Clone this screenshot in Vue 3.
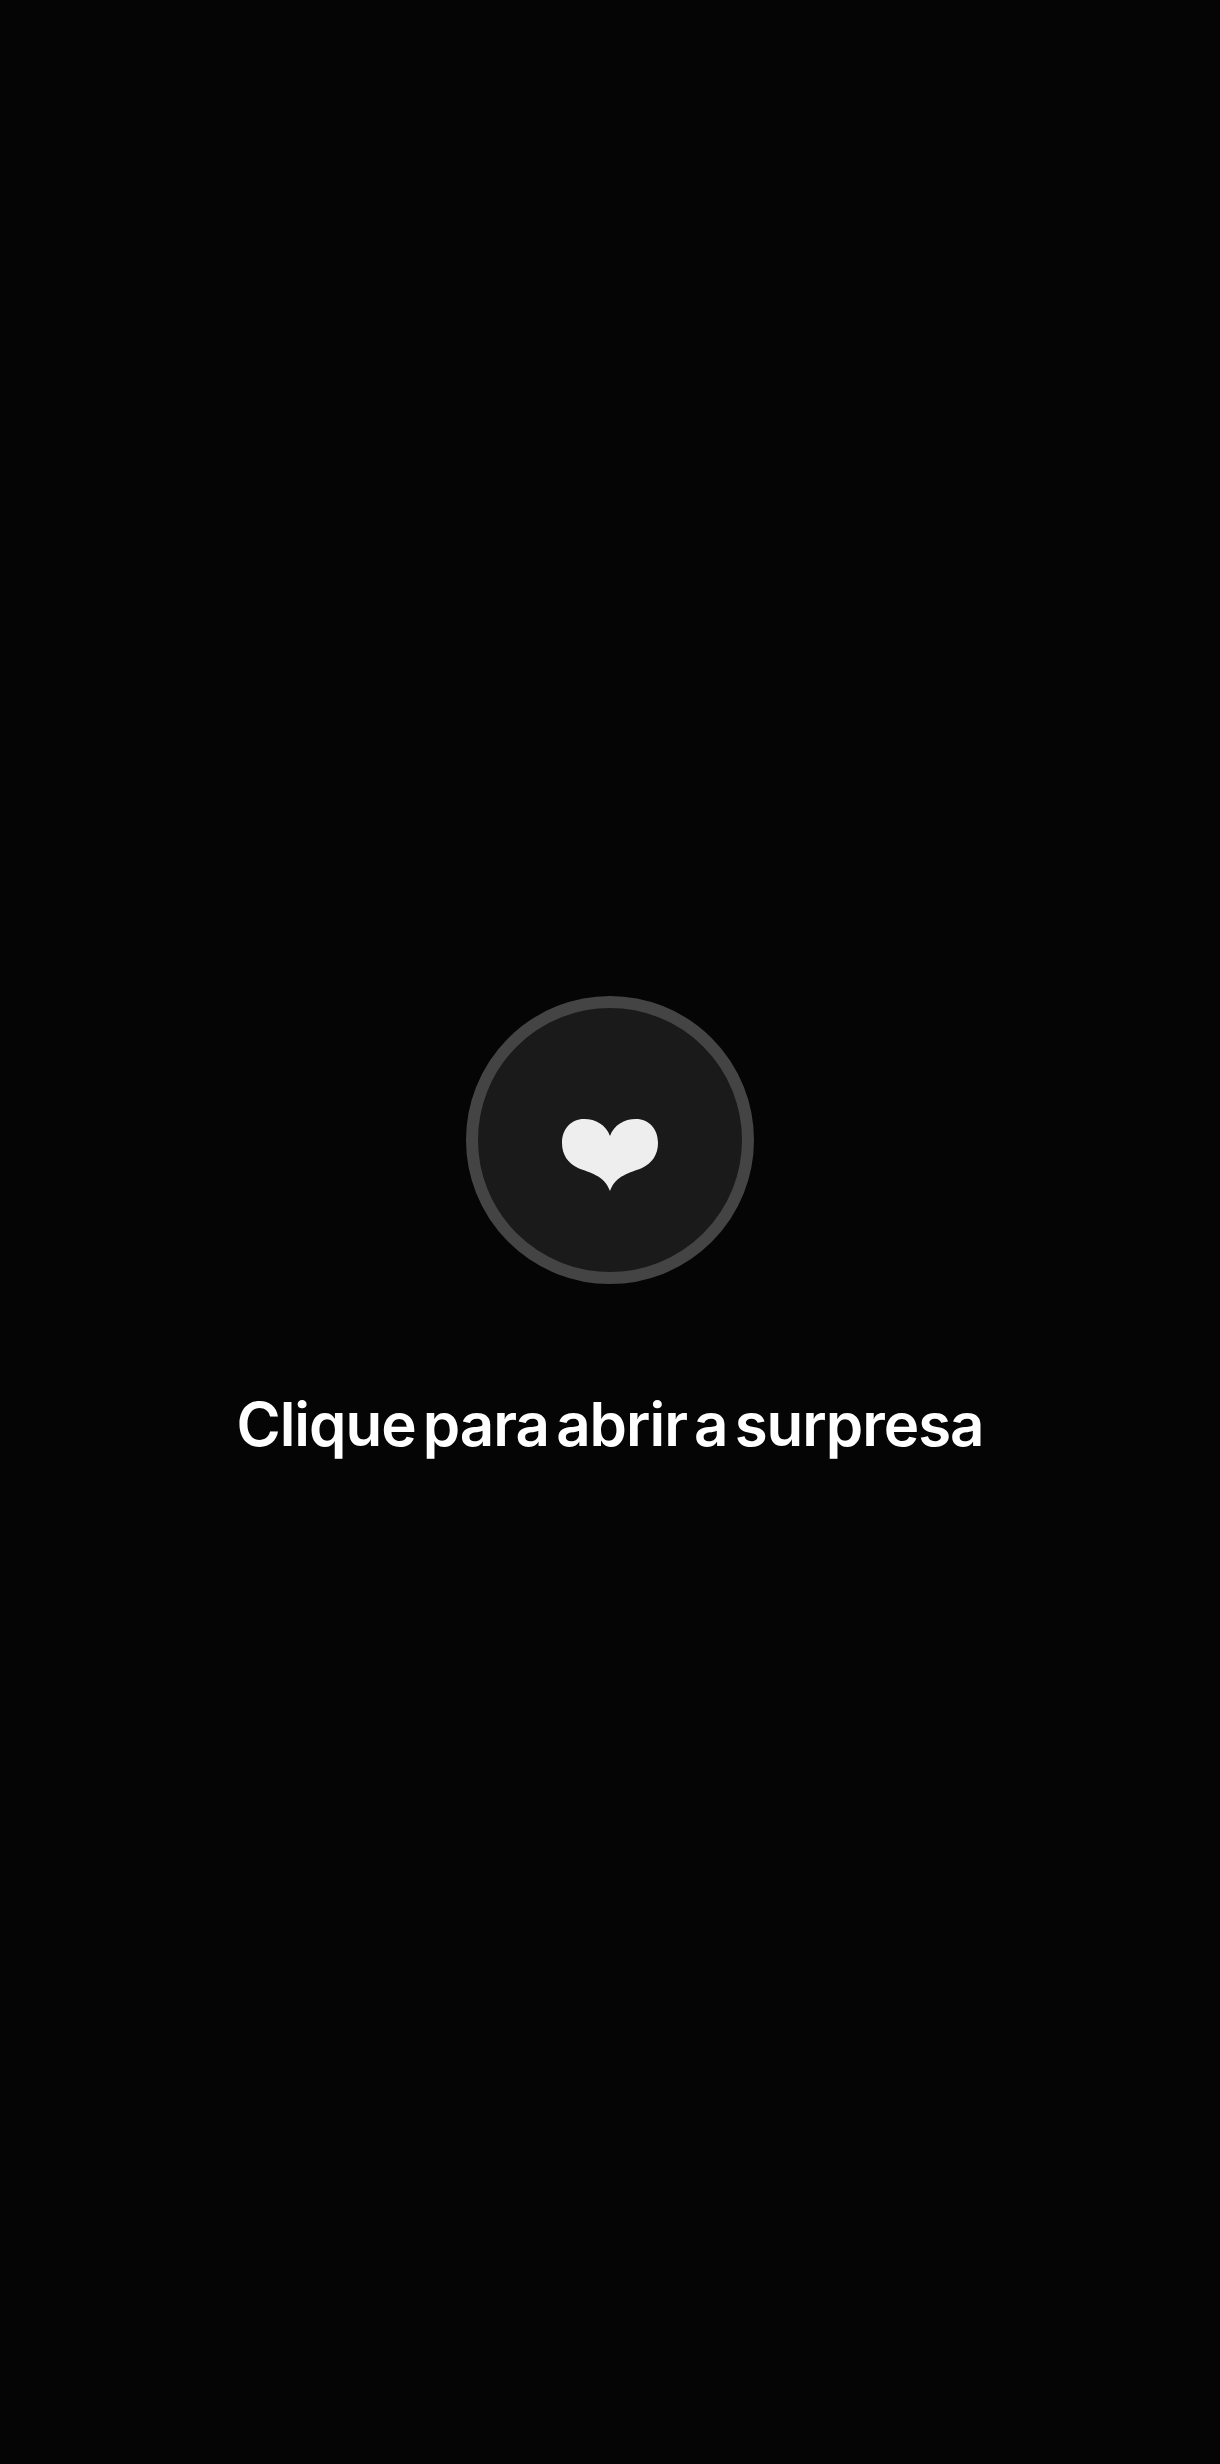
<script setup>
const title = 'Clique para abrir a surpresa'
</script>

<template>
  <main class="intro">
    <button class="intro__circle" type="button" aria-label="Abrir a surpresa">
      <svg class="intro__heart" viewBox="0 0 96 72" aria-hidden="true">
        <path d="M48 17C44 6 34 0 22 0C9 0 0 10 0 24C0 36 6 44 16 49C28 54 42 56 48 72C54 56 68 54 80 49C90 44 96 36 96 24C96 10 87 0 74 0C62 0 52 6 48 17Z" />
      </svg>
    </button>
    <h1 class="intro__title">{{ title }}</h1>
  </main>
</template>

<style scoped>
.intro {
  min-height: 100vh;
  display: flex;
  flex-direction: column;
  align-items: center;
  justify-content: center;
  gap: 96px;
  background: #050505;
}

.intro__circle {
  width: 288px;
  height: 288px;
  box-sizing: border-box;
  padding: 0;
  display: flex;
  align-items: center;
  justify-content: center;
  border: 12px solid #444444;
  border-radius: 50%;
  background: #1a1a1a;
  cursor: pointer;
}

.intro__heart {
  width: 96px;
  height: 72px;
  margin-top: 30px;
  fill: #eeeeee;
}

.intro__title {
  margin: 0;
  font-family: Inter, "Liberation Sans", sans-serif;
  font-size: 60px;
  font-weight: 600;
  line-height: 88px;
  letter-spacing: -1px;
  word-spacing: -7px;
  color: #ffffff;
}
</style>

<style>
body {
  background: #050505;
}
</style>
